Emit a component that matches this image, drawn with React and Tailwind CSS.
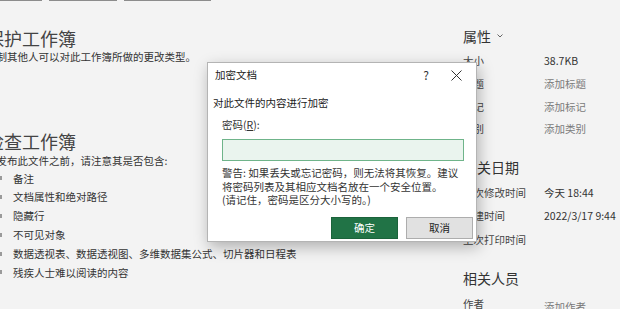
import React from 'react';

const font = { fontFamily: '"Noto Sans CJK SC", "Noto Sans", sans-serif' };

const checkItems = [
  '备注',
  '文档属性和绝对路径',
  '隐藏行',
  '不可见对象',
  '数据透视表、数据透视图、多维数据集公式、切片器和日程表',
  '残疾人士难以阅读的内容',
];

const PropRow = ({ label, value, muted, className = '' }) => (
  <div className={`grid grid-cols-[81px_1fr] items-center text-[10.5px] leading-[14px] ${className}`}>
    <span className="text-[#444]">{label}</span>
    <span className={`whitespace-nowrap ${muted ? 'text-[#7a7a7a]' : 'text-[#333]'}`}>{value}</span>
  </div>
);

const EncryptDialog = () => (
  <div className="absolute left-[207px] top-[62px] w-[270px] h-[180px] bg-white border border-[#b4b4b4] shadow-[2px_5px_14px_rgba(0,0,0,0.28)] flex flex-col">
    <div className="flex items-center h-[24px] pl-[7px] text-[10.5px] text-[#222]">
      <span className="flex-1">加密文档</span>
      <span className="w-[20px] text-center text-[12px] text-[#333]">?</span>
      <span className="w-[40px] flex justify-center">
        <svg width="11" height="11" viewBox="0 0 11 11">
          <path d="M0.5 0.5 L10.5 10.5 M10.5 0.5 L0.5 10.5" stroke="#333" strokeWidth="1" />
        </svg>
      </span>
    </div>
    <div className="px-[5px] mt-[9px] text-[10.5px] leading-[14px] text-[#1a1a1a]">对此文件的内容进行加密</div>
    <div className="pl-[14px] pr-[12px] mt-[8px]">
      <div className="text-[10.5px] leading-[14px] text-[#333]">
        密码(<span className="underline">R</span>):
      </div>
      <div className="mt-[7px] h-[22px] bg-[#eaf4ee] border border-[#6fb48a]" />
      <div className="mt-[5px] text-[10.5px] leading-[13.5px] text-[#333] whitespace-nowrap">
        <div>警告: 如果丢失或忘记密码，则无法将其恢复。建议</div>
        <div>将密码列表及其相应文档名放在一个安全位置。</div>
        <div>(请记住，密码是区分大小写的。)</div>
      </div>
    </div>
    <div className="flex gap-[8px] pl-[123px] mt-[10px]">
      <button className="w-[67px] h-[22px] bg-[#217346] border border-[#1b633b] text-white text-[10.5px]">确定</button>
      <button className="w-[67px] h-[22px] bg-[#e1e1e1] border border-[#adadad] text-[#222] text-[10.5px]">取消</button>
    </div>
  </div>
);

export default function App() {
  return (
    <div className="relative w-[620px] h-[309px] overflow-hidden bg-[#f3f3f3]" style={font}>
      <div className="flex gap-[7px] h-[1px]">
        <div className="w-[42px] bg-[#8c8c8c]" />
        <div className="w-[68px] bg-[#8c8c8c]" />
        <div className="w-[87px] bg-[#8c8c8c]" />
      </div>

      <div className="flex">
        <div className="w-[477px] -ml-[14px] shrink-0">
          <div className="mt-[25px] text-[18px] leading-[24px] text-[#444]">保护工作簿</div>
          <div className="text-[10.5px] leading-[14px] text-[#333]">控制其他人可以对此工作簿所做的更改类型。</div>

          <div className="mt-[65px] text-[18px] leading-[24px] text-[#444]">检查工作簿</div>
          <div className="mt-[1px] text-[10.5px] leading-[14px] text-[#333]">在发布此文件之前，请注意其是否包含:</div>
          <ul className="mt-[1px]">
            {checkItems.map((item) => (
              <li key={item} className="flex items-center h-[18.8px] text-[10.5px] text-[#333] whitespace-nowrap">
                <span className="w-[4px] h-[4px] ml-[12px] bg-[#9a9a9a]" />
                <span className="ml-[11px]">{item}</span>
              </li>
            ))}
          </ul>
        </div>

        <div className="flex-1">
          <div className="mt-[26px] flex items-center gap-[6px] text-[14px] leading-[18px] text-[#333]">
            属性
            <svg width="6" height="4" viewBox="0 0 6 4">
              <path d="M0.5 0.5 L3 3 L5.5 0.5" stroke="#555" fill="none" strokeWidth="0.9" />
            </svg>
          </div>
          <PropRow className="mt-[5px] h-[22.7px]" label="大小" value="38.7KB" />
          <PropRow className="h-[22.7px]" label="标题" value="添加标题" muted />
          <PropRow className="h-[22.7px]" label="标记" value="添加标记" muted />
          <PropRow className="h-[22.7px]" label="类别" value="添加类别" muted />

          <div className="mt-[17px] text-[14px] leading-[18px] text-[#333]">相关日期</div>
          <PropRow className="mt-[5px] h-[23.5px]" label="上次修改时间" value="今天 18:44" />
          <PropRow className="h-[23.5px]" label="创建时间" value="2022/3/17 9:44" />
          <PropRow className="h-[23.5px]" label="上次打印时间" value="" />

          <div className="mt-[18px] text-[14px] leading-[18px] text-[#333]">相关人员</div>
          <div className="grid grid-cols-[81px_1fr] mt-[10px] text-[10.5px] leading-[14px]">
            <span className="text-[#444]">作者</span>
            <span className="mt-[3px] text-[#7a7a7a] whitespace-nowrap">添加作者</span>
          </div>
        </div>
      </div>

      <EncryptDialog />
    </div>
  );
}
